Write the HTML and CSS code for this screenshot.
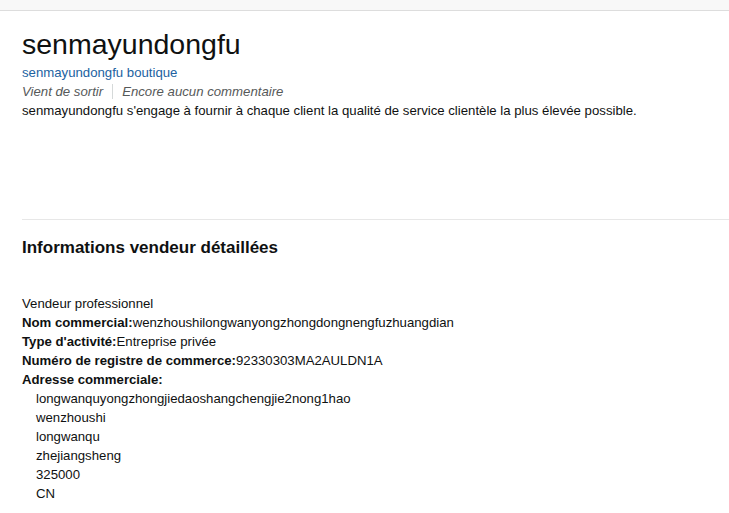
FILE: index.html
```html
<!DOCTYPE html>
<html lang="fr">
<head>
    <meta charset="UTF-8">
    <meta name="viewport" content="width=device-width, initial-scale=1.0">
    <title>senmayundongfu</title>
    <link rel="stylesheet" href="styles.css">
</head>
<body>
    <div class="top-bar"></div>

    <div class="page">
        <div class="seller-header">
            <h1 class="seller-name">senmayundongfu</h1>
            <a href="#" class="store-link">senmayundongfu boutique</a>
            <div class="seller-meta">
                <span>Vient de sortir</span>
                <span class="meta-sep"></span>
                <span>Encore aucun commentaire</span>
            </div>
            <p class="seller-about">senmayundongfu s'engage à fournir à chaque client la qualité de service clientèle la plus élevée possible.</p>
        </div>

        <hr class="divider">

        <div class="seller-info">
            <h3 class="info-title">Informations vendeur détaillées</h3>
            <div class="info-rows">
                <div>Vendeur professionnel</div>
                <div><span class="label">Nom commercial:</span>wenzhoushilongwanyongzhongdongnengfuzhuangdian</div>
                <div><span class="label">Type d'activité:</span>Entreprise privée</div>
                <div><span class="label">Numéro de registre de commerce:</span>92330303MA2AULDN1A</div>
                <div><span class="label">Adresse commerciale:</span></div>
                <div class="address">
                    <div>longwanquyongzhongjiedaoshangchengjie2nong1hao</div>
                    <div>wenzhoushi</div>
                    <div>longwanqu</div>
                    <div>zhejiangsheng</div>
                    <div>325000</div>
                    <div>CN</div>
                </div>
            </div>
        </div>
    </div>
</body>
</html>
```

FILE: styles.css
```css
body {
    font-family: 'Liberation Sans', Arial, sans-serif;
    font-size: 13.2px;
    line-height: 19px;
    color: #0f1111;
    margin: 0;
    background-color: white;
    overflow: hidden;
}
.top-bar {
    height: 10px;
    background-color: #f8f8f8;
    border-bottom: 1px solid #dddddd;
}
.page {
    padding-left: 22px;
}
.seller-header {
    padding-top: 16px;
}
.seller-name {
    font-size: 28.5px;
    font-weight: normal;
    line-height: 34px;
    margin: 0 0 2px 0;
}
.store-link {
    display: block;
    color: #2162a1;
    text-decoration: none;
}
.seller-meta {
    display: flex;
    align-items: center;
    font-style: italic;
    color: #565959;
}
.meta-sep {
    width: 1px;
    height: 15px;
    background-color: #d5d9d9;
    margin: 0 9px;
}
.seller-about {
    margin: 0;
}
.divider {
    border: none;
    border-top: 1px solid #e7e7e7;
    margin: 99px 0 0 0;
}
.info-title {
    font-size: 17px;
    font-weight: bold;
    line-height: 24px;
    margin: 16px 0 0 0;
}
.info-rows {
    margin-top: 34px;
}
.label {
    font-weight: bold;
}
.address {
    padding-left: 14px;
}
```
